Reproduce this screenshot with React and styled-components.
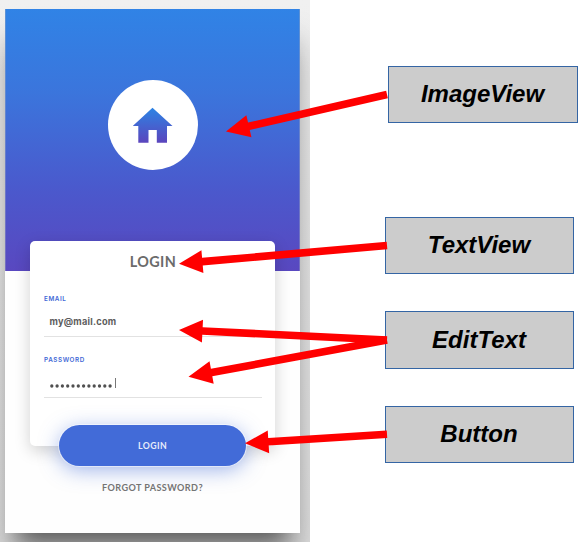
import React from 'react';
import styled, { createGlobalStyle } from 'styled-components';

const GlobalStyle = createGlobalStyle`
  * { box-sizing: border-box; }
  html, body { margin: 0; padding: 0; background: #fff; overflow: hidden; }
`;

const Canvas = styled.main`
  position: relative;
  display: flex;
  width: 578px;
  height: 543px;
  overflow: hidden;
  background: #fff;
`;

const Stage = styled.section`
  flex: none;
  width: 310px;
  height: 542px;
  padding: 9px 10px 0 5px;
  overflow: hidden;
  background: linear-gradient(#f0f0f0, #e3e3e3);
`;

const Phone = styled.div`
  display: flex;
  flex-direction: column;
  align-items: center;
  width: 295px;
  height: 524px;
  background: #fefefe;
  box-shadow: 0 22px 22px -14px rgba(0, 0, 0, 0.5), 0 34px 34px rgba(0, 0, 0, 0.24);
  font-family: Lato, "Liberation Sans", sans-serif;
`;

const Hero = styled.header`
  flex: none;
  display: flex;
  justify-content: center;
  width: 295px;
  height: 262px;
  padding-top: 71px;
  background: linear-gradient(#3083e6 0%, #3b75dc 32%, #4b58cc 70%, #5948c0 100%);
  box-shadow: inset 1px 0 rgba(160, 170, 190, 0.4), inset -1px 0 rgba(160, 170, 190, 0.4);
`;

const Logo = styled.div`
  display: flex;
  justify-content: center;
  width: 90px;
  height: 90px;
  padding-top: 27px;
  border-radius: 50%;
  background: #fff;
`;

const Card = styled.div`
  flex: none;
  display: flex;
  flex-direction: column;
  width: 245px;
  height: 205px;
  margin: -30px 0 0;
  padding: 11px 13px 0 14px;
  border-radius: 5px;
  background: #fff;
  box-shadow: 0 5px 16px rgba(0, 0, 0, 0.18);
`;

const Title = styled.h1`
  height: 20px;
  margin: 0 0 21px;
  color: #6b6b6b;
  font-size: 14.4px;
  font-weight: 700;
  line-height: 20px;
  letter-spacing: 0.4px;
  text-align: center;
`;

const Field = styled.div`
  display: flex;
  flex-direction: column;
  height: 60.5px;
`;

const FieldName = styled.label`
  height: 12px;
  color: #4268d6;
  font: 600 6.3px/13px Inter, "Liberation Sans", sans-serif;
  letter-spacing: 0.6px;
`;

const FieldValue = styled.div`
  display: flex;
  align-items: center;
  height: 32px;
  padding: 2px 0 0 5.5px;
  border-bottom: 1.5px solid #e2e2e2;
  color: #5c5c5c;
  font: 700 9.2px/12px Inter, "Liberation Sans", sans-serif;
  letter-spacing: 0.24px;
`;

const Dots = styled.svg`
  width: 63px;
  height: 4px;
  margin-top: 7px;
  fill: #505050;
`;

const Caret = styled.i`
  width: 1.3px;
  height: 10px;
  margin: 2px 0 0 2px;
  background: #777;
`;

const LoginButton = styled.button`
  flex: none;
  width: 187px;
  height: 41px;
  margin-top: -21px;
  padding: 0;
  border: 0;
  border-radius: 21px;
  background: #426bd8;
  box-shadow: 0 0 0 1px rgba(255, 255, 255, 0.5), 0 4px 20px rgba(66, 107, 216, 0.5);
  color: #e6ecfb;
  font: 700 8.7px/41px Lato, "Liberation Sans", sans-serif;
  letter-spacing: 0.45px;
`;

const Forgot = styled.a`
  height: 14px;
  margin-top: 15px;
  color: #747474;
  font-size: 9.1px;
  font-weight: 700;
  line-height: 14px;
  letter-spacing: 0.41px;
`;

const Labels = styled.aside`
  display: flex;
  flex-direction: column;
  align-items: flex-start;
  padding: 66px 0 0 75px;
`;

const Label = styled.div`
  flex: none;
  width: ${(p) => p.$width || 189}px;
  height: ${(p) => p.$height || 57}px;
  margin: 0 0 ${(p) => p.$gap}px ${(p) => p.$indent || 0}px;
  padding-right: 1px;
  border: 1px solid #3465a4;
  background: #ccc;
  color: #000;
  font: italic 700 24px/${(p) => p.$line || 54}px "Liberation Sans", Arial, sans-serif;
  text-align: center;
`;

const Overlay = styled.svg`
  position: absolute;
  inset: 0;
  fill: red;
  pointer-events: none;
`;

const House = () => (
  <svg width="40" height="36" viewBox="0 0 40 36">
    <defs>
      <linearGradient id="house" x1="0" y1="0" x2="0" y2="1">
        <stop offset="0" stopColor="#2c84e4" />
        <stop offset="1" stopColor="#5b45bd" />
      </linearGradient>
    </defs>
    <path fill="url(#house)" d="M19.5 .8 39.5 19H34V35.7H23.8V23H15.5V35.7H5.3V19H-.2Z" />
  </svg>
);

const arrows = [
  { from: [387, 94.5], to: [226, 131.5] },
  { from: [387, 245.5], to: [179, 263.7] },
  { from: [387, 340], to: [179, 329.9] },
  { from: [387, 340], to: [188.5, 376.8] },
  { from: [387, 434.3], to: [245, 443.3] },
];

const Arrow = ({ from, to }) => {
  const dx = from[0] - to[0];
  const dy = from[1] - to[1];
  const length = Math.hypot(dx, dy);
  const angle = (Math.atan2(dy, dx) * 180) / Math.PI;
  return (
    <path
      transform={`translate(${to[0]} ${to[1]}) rotate(${angle})`}
      d={`M0 0 23.5-11.4V-3.8H${length}V3.8H23.5V11.4Z`}
    />
  );
};

export default function App() {
  return (
    <>
      <GlobalStyle />
      <Canvas>
        <Stage>
          <Phone>
            <Hero>
              <Logo><House /></Logo>
            </Hero>
            <Card>
              <Title>LOGIN</Title>
              <Field>
                <FieldName>EMAIL</FieldName>
                <FieldValue>my@mail.com</FieldValue>
              </Field>
              <Field>
                <FieldName>PASSWORD</FieldName>
                <FieldValue>
                  <Dots viewBox="0 0 63 4">
                    {Array.from({ length: 12 }, (_, i) => (
                      <circle key={i} cx={1.8 + i * 5.3} cy="2" r="1.65" />
                    ))}
                  </Dots>
                  <Caret />
                </FieldValue>
              </Field>
            </Card>
            <LoginButton>LOGIN</LoginButton>
            <Forgot>FORGOT PASSWORD?</Forgot>
          </Phone>
        </Stage>
        <Labels>
          <Label $width={190} $indent={3} $gap={94}>ImageView</Label>
          <Label $gap={37}>TextView</Label>
          <Label $height={58} $line={56} $gap={37}>EditText</Label>
          <Label $gap={0}>Button</Label>
        </Labels>
        <Overlay width="578" height="543" viewBox="0 0 578 543">
          {arrows.map((a, i) => <Arrow key={i} {...a} />)}
        </Overlay>
      </Canvas>
    </>
  );
}
